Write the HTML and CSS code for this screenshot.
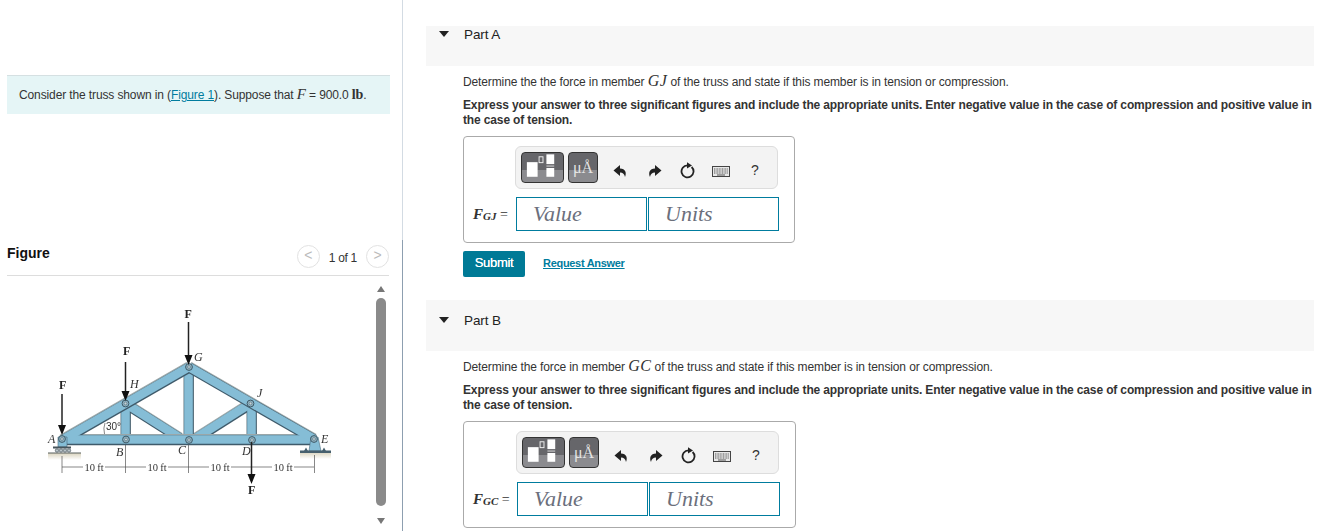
FILE: index.html
```html
<!DOCTYPE html>
<html lang="en">
  <head>
    <meta charset="UTF-8" />
    <title>Truss problem</title>
    <link rel="stylesheet" href="styles.css">
  </head>

  <body>
    <svg class="sprites" width="0" height="0">
      <symbol id="i-undo" viewBox="0 0 14 14">
        <path d="M7 1 L0.5 6.500 L7 12 V8.6 C10 8.6 11.4 10.2 12 13 C13.8 8.8 12.6 4.6 7 4.4 Z" />
      </symbol>
      <symbol id="i-redo" viewBox="0 0 14 14">
        <path d="M7 1 L13.5 6.500 L7 12 V8.6 C4 8.6 2.6 10.2 2 13 C0.2 8.8 1.4 4.6 7 4.4 Z" />
      </symbol>
      <symbol id="i-reset" viewBox="0 0 16 17">
        <path d="M11.6 5 A6 6 0 1 1 7.500 3.400" fill="none" stroke="#222" stroke-width="1.8" />
        <path d="M7 0.2 L12 3.400 L7 6.600 Z" />
      </symbol>
      <symbol id="i-keys" viewBox="0 0 18 11">
        <rect x="0.5" y="0.5" width="17" height="10" fill="#e8e8e8" stroke="#444" />
        <path d="M2 3 H16 M2 5 H16 M2 7 H16" stroke="#555" stroke-width="1" stroke-dasharray="1 .6" />
        <path d="M5 9 H13" stroke="#555" stroke-width="1" />
      </symbol>
      <symbol id="i-tpl" viewBox="0 0 42 30">
        <rect x="5" y="9" width="11" height="15" fill="#fff" />
        <rect x="17.5" y="3.5" width="4" height="6" fill="none" stroke="#eee" />
        <rect x="25" y="1" width="8" height="10" fill="#fff" />
        <rect x="25" y="12.5" width="8" height="1" fill="#ddd" />
        <rect x="25" y="15" width="8" height="9" fill="#fff" />
      </symbol>
    </svg>

    <div class="page">
      <aside class="left">
        <p class="intro">
          Consider the truss shown in (<a href="#">Figure 1</a>). Suppose that <i class="math">F</i> = 900.0 <span class="unit">lb</span>.
        </p>
        <section class="figure">
          <header class="figure-head">
            <h2>Figure</h2>
            <div class="pager">
              <span class="pager-btn">&lt;</span>
              <span class="pager-num">1 of 1</span>
              <span class="pager-btn">&gt;</span>
            </div>
          </header>
          <div class="figure-body">
            <svg class="truss" viewBox="7 276 365 255" width="365" height="255">
              <defs>
                <linearGradient id="shadow" x1="0" y1="0" x2="0" y2="1">
                  <stop offset="0" stop-color="#d9d3bd" />
                  <stop offset="1" stop-color="#ffffff" />
                </linearGradient>
                <g id="pin">
                  <circle r="3.4" fill="#8fb3c2" stroke="#3f5a68" stroke-width="1" />
                  <circle r="1.4" fill="#c9d4d8" stroke="#3f5a68" stroke-width=".5" />
                </g>
                <g id="webs">
                  <line x1="125.500" y1="404" x2="125.500" y2="440" />
                  <line x1="188.500" y1="367" x2="188.500" y2="440" />
                  <line x1="251.500" y1="404" x2="251.500" y2="440" />
                  <line x1="128" y1="405" x2="180" y2="438" />
                  <line x1="196" y1="438" x2="248" y2="405" />
                </g>
                <g id="chords">
                  <line x1="62" y1="439.5" x2="314" y2="439.5" />
                  <line x1="62" y1="440" x2="189" y2="367" />
                  <line x1="189" y1="367" x2="314" y2="439" />
                </g>
              </defs>

              <!-- ground -->
              <rect x="48" y="453" width="33" height="7" fill="url(#shadow)" />
              <rect x="300" y="452" width="31" height="7" fill="url(#shadow)" />

              <!-- web members -->
              <use class="m-top" href="#webs" />
              <use class="m-low" href="#webs" />
              <use class="m-fill" href="#webs" />
              <!-- chords -->
              <use class="m-top" href="#chords" />
              <use class="m-low" href="#chords" />
              <use class="m-fill" href="#chords" />

              <!-- supports -->
              <path d="M58 437 H67 V447 H58 Z" fill="#85bdd6" stroke="#4a6a7a" stroke-width=".6" />
              <rect x="53" y="446.5" width="18" height="2" fill="#47555c" />
              <g fill="#b9c4c8" stroke="#47555c" stroke-width=".7">
                <circle cx="57" cy="450.5" r="1.7" />
                <circle cx="61" cy="450.5" r="1.7" />
                <circle cx="65" cy="450.5" r="1.7" />
                <circle cx="69" cy="450.5" r="1.7" />
              </g>
              <rect x="48" y="452.5" width="33" height="1" fill="#59615f" />
              <path d="M311 437 H318 L321 451 H309 Z" fill="#85bdd6" stroke="#4a6a7a" stroke-width=".6" />
              <path d="M304 451 L306 447.500 L308 451 Z M322 451 L324 447.500 L326 451 Z" fill="#47606e" />
              <rect x="300" y="450.5" width="31" height="2.5" fill="#47606e" />

              <use href="#pin" x="62" y="439" />
              <use href="#pin" x="125.5" y="403.5" />
              <use href="#pin" x="126" y="439.5" />
              <use href="#pin" x="189" y="367" />
              <use href="#pin" x="189" y="440" />
              <use href="#pin" x="250.5" y="403.5" />
              <use href="#pin" x="252" y="440" />
              <use href="#pin" x="314" y="439" />

              <!-- dimensions -->
              <g stroke="#555" stroke-width=".7">
                <line x1="62" y1="467" x2="314" y2="467" />
                <line x1="62" y1="456" x2="62" y2="473" />
                <line x1="125.5" y1="445" x2="125.5" y2="473" />
                <line x1="188.5" y1="445" x2="188.5" y2="473" />
                <line x1="314.5" y1="455" x2="314.5" y2="473" />
              </g>
              <g class="dim">
                <rect x="83" y="461" width="22" height="12" fill="#fff" />
                <rect x="146" y="461" width="22" height="12" fill="#fff" />
                <rect x="209" y="461" width="22" height="12" fill="#fff" />
                <rect x="272" y="461" width="22" height="12" fill="#fff" />
                <text x="94" y="470.5">10 ft</text>
                <text x="157" y="470.5">10 ft</text>
                <text x="220" y="470.5">10 ft</text>
                <text x="283" y="470.5">10 ft</text>
              </g>

              <!-- loads -->
              <g class="arrow">
                <line x1="62" y1="394" x2="62" y2="428" />
                <line x1="125.5" y1="362" x2="125.5" y2="394" />
                <line x1="188.5" y1="322" x2="188.5" y2="358" />
                <line x1="251.5" y1="442" x2="251.5" y2="476" />
              </g>
              <path d="M58 425 H66 L62 435 Z M121.500 391 H129.500 L125.500 401 Z M184.500 355 H192.500 L188.500 365 Z M247.500 474 H255.500 L251.500 484 Z" fill="#111" />

              <g class="load">
                <text x="62.5" y="389">F</text>
                <text x="126.5" y="355">F</text>
                <text x="188" y="318">F</text>
                <text x="251.5" y="494">F</text>
              </g>
              <g class="node">
                <text x="48" y="443">A</text>
                <text x="116" y="456">B</text>
                <text x="178" y="454">C</text>
                <text x="242" y="455">D</text>
                <text x="321" y="443">E</text>
                <text x="194" y="361">G</text>
                <text x="130" y="388">H</text>
                <text x="257" y="397">J</text>
              </g>
              <path d="M105 423 Q103 428 104.500 434" fill="none" stroke="#555" stroke-width=".7" />
              <text class="angle" x="106" y="430">30°</text>
            </svg>
            <div class="vbar">
              <span class="vbar-up"></span>
              <span class="vbar-thumb"></span>
              <span class="vbar-down"></span>
            </div>
          </div>
        </section>
      </aside>

      <main class="right">
        <section class="part">
          <h3 class="part-head part-head--a"><span class="caret"></span>Part A</h3>
          <div class="part-body">
            <p class="prompt">Determine the the force in member <i class="math math--lg">GJ</i> of the truss and state if this member is in tension or compression.</p>
            <p class="hint">Express your answer to three significant figures and include the appropriate units. Enter negative value in the case of compression and positive value in the case of tension.</p>
            <div class="answer">
              <div class="toolbar">
                <span class="tb-btn tb-btn--tpl"><svg width="42" height="30"><use href="#i-tpl" /></svg></span>
                <span class="tb-btn tb-btn--unit">μÅ</span>
                <svg class="tb-ic tb-ic--undo" width="14" height="14"><use href="#i-undo" /></svg>
                <svg class="tb-ic tb-ic--redo" width="14" height="14"><use href="#i-redo" /></svg>
                <svg class="tb-ic tb-ic--reset" width="16" height="17"><use href="#i-reset" /></svg>
                <svg class="tb-ic tb-ic--keys" width="18" height="11"><use href="#i-keys" /></svg>
                <span class="tb-help">?</span>
              </div>
              <div class="fields">
                <label class="field-label field-label--gj"><i>F</i><sub>GJ</sub> =</label>
                <span class="field">Value</span>
                <span class="field">Units</span>
              </div>
            </div>
            <div class="actions">
              <button class="submit">Submit</button>
              <a class="request" href="#">Request Answer</a>
            </div>
          </div>
        </section>

        <section class="part">
          <h3 class="part-head part-head--b"><span class="caret"></span>Part B</h3>
          <div class="part-body">
            <p class="prompt">Determine the force in member <i class="math math--lg">GC</i> of the truss and state if this member is in tension or compression.</p>
            <p class="hint">Express your answer to three significant figures and include the appropriate units. Enter negative value in the case of compression and positive value in the case of tension.</p>
            <div class="answer">
              <div class="toolbar">
                <span class="tb-btn tb-btn--tpl"><svg width="42" height="30"><use href="#i-tpl" /></svg></span>
                <span class="tb-btn tb-btn--unit">μÅ</span>
                <svg class="tb-ic tb-ic--undo" width="14" height="14"><use href="#i-undo" /></svg>
                <svg class="tb-ic tb-ic--redo" width="14" height="14"><use href="#i-redo" /></svg>
                <svg class="tb-ic tb-ic--reset" width="16" height="17"><use href="#i-reset" /></svg>
                <svg class="tb-ic tb-ic--keys" width="18" height="11"><use href="#i-keys" /></svg>
                <span class="tb-help">?</span>
              </div>
              <div class="fields">
                <label class="field-label"><i>F</i><sub>GC</sub> =</label>
                <span class="field">Value</span>
                <span class="field">Units</span>
              </div>
            </div>
          </div>
        </section>
      </main>
    </div>
  </body>
</html>
```

FILE: styles.css
```css
* {
  box-sizing: border-box;
}
html,
body {
  margin: 0;
  height: 531px;
  overflow: hidden;
  background: #fff;
}
body {
  font-family: "Liberation Sans", Arial, sans-serif;
  font-size: 12px;
  letter-spacing: -0.12px;
  color: #333;
}
.sprites {
  position: absolute;
}
.page {
  display: flex;
  height: 531px;
}

/* left column */
.left {
  width: 403px;
  flex: none;
  padding-top: 75px;
  border-right: 1px solid #d3dbe3;
}
.intro {
  margin: 0 12px 0 7px;
  height: 39px;
  padding: 11px 12px 0;
  line-height: 16px;
  background: #e5f5f6;
  border-top: 1px solid #d5e0e2;
}
.intro a {
  color: #007c9e;
}
.math {
  font-family: "Liberation Serif", serif;
  font-size: 15px;
  line-height: 1;
}
.math--lg {
  font-size: 16px;
  letter-spacing: 0.5px;
}
.unit {
  font-family: "Liberation Serif", serif;
  font-size: 14px;
  font-weight: bold;
  line-height: 1;
}
.figure {
  margin-top: 126px;
  margin-right: -1px;
  height: 291px;
  border-right: 1px solid #8d9fb0;
}
.figure-head {
  display: flex;
  justify-content: space-between;
  align-items: center;
  margin: 0 13px 0 7px;
  height: 36px;
  border-bottom: 1px solid #ddd;
  padding-bottom: 8px;
}
.figure-head h2 {
  margin: 0 0 2px;
  font-size: 14px;
  font-weight: bold;
  letter-spacing: 0;
  color: #111;
}
.pager {
  display: flex;
  align-items: center;
  gap: 9px;
  margin-top: 5px;
}
.pager-btn {
  width: 23px;
  height: 23px;
  border: 1px solid #e2e2e2;
  border-radius: 50%;
  text-align: center;
  line-height: 19px;
  font-size: 14px;
  color: #bbb;
}
.pager-num {
  padding-top: 3px;
  letter-spacing: -0.3px;
  color: #333;
}
.figure-body {
  display: flex;
  height: 255px;
  padding-left: 7px;
}
.truss {
  display: block;
  flex: none;
  filter: blur(0.3px);
}
.m-top {
  stroke: #9aa6a8;
  stroke-width: 10;
  transform: translate(0, -0.6px);
}
.m-low {
  stroke: #3f5a6a;
  stroke-width: 10;
  transform: translate(0.3px, 0.7px);
}
.m-fill {
  stroke: #85bdd6;
  stroke-width: 8.6;
}
.arrow line {
  stroke: #222;
  stroke-width: 1.5;
}
.load text {
  font: bold 12px "Liberation Serif", serif;
  fill: #222;
  text-anchor: middle;
}
.node text {
  font: italic 12px "Liberation Serif", serif;
  fill: #333;
}
.dim text {
  font: 10.5px "Liberation Serif", serif;
  fill: #333;
  text-anchor: middle;
}
.angle {
  font: 10px "Liberation Sans", sans-serif;
  fill: #333;
}
.vbar {
  width: 10px;
  margin-left: 4px;
  display: flex;
  flex-direction: column;
  align-items: center;
}
.vbar-up,
.vbar-down {
  width: 0;
  height: 0;
  border-left: 4.5px solid transparent;
  border-right: 4.5px solid transparent;
}
.vbar-up {
  margin-top: 10px;
  border-bottom: 6px solid #777;
}
.vbar-thumb {
  width: 10px;
  height: 208px;
  margin: 6px 0 12px;
  background: #8a8a8a;
  border-radius: 5px;
}
.vbar-down {
  border-top: 6px solid #777;
}

/* right column */
.right {
  width: 888px;
  margin-left: 23px;
  padding-top: 26px;
  flex: none;
}
.part-head {
  margin: 0;
  background: #f7f7f7;
  padding-left: 38px;
  font-size: 13.5px;
  font-weight: normal;
  letter-spacing: -0.1px;
  line-height: 16px;
  color: #222;
}
.part-head--a {
  height: 40px;
  padding-top: 1px;
}
.part-head--b {
  height: 51px;
  padding-top: 13px;
  margin-top: 23px;
}
.caret {
  display: inline-block;
  width: 0;
  height: 0;
  margin: 0 15px 2px -25px;
  border-left: 5px solid transparent;
  border-right: 5px solid transparent;
  border-top: 6px solid #222;
  vertical-align: middle;
}
.part-body {
  padding-left: 37px;
}
.prompt {
  margin: 7px 0 0;
  line-height: 15px;
  height: 15px;
}
.hint {
  margin: 10px 0 0;
  font-weight: bold;
  letter-spacing: -0.14px;
  line-height: 14.5px;
}
.answer {
  display: inline-flex;
  flex-direction: column;
  align-items: flex-end;
  margin-top: 9px;
  padding: 9px 15px 11px 9px;
  border: 1px solid #aaa;
  border-radius: 4px;
  height: 107px;
}
.toolbar {
  display: flex;
  align-items: center;
  width: 263px;
  height: 43px;
  margin-right: 1px;
  padding-left: 5px;
  background: #f3f3f3;
  border: 1px solid #ddd;
  border-radius: 6px;
}
.tb-btn {
  height: 31px;
  border: 1px solid #333;
  border-radius: 4px;
  background: linear-gradient(#66666a 58%, #8b8b8f 58%);
  display: flex;
  align-items: center;
  justify-content: center;
}
.tb-btn--tpl {
  width: 43px;
}
.tb-btn--unit {
  width: 30px;
  margin-left: 4px;
  font-family: "Liberation Serif", serif;
  font-size: 16px;
  color: #e4e4e4;
}
.tb-ic {
  fill: #222;
  flex: none;
  margin-top: 6px;
}
.tb-ic--undo {
  margin-left: 15px;
}
.tb-ic--redo {
  margin-left: 21px;
}
.tb-ic--reset {
  margin-left: 18px;
}
.tb-ic--keys {
  margin-left: 16px;
  margin-top: 7px;
}
.tb-help {
  margin-left: 21px;
  margin-top: 4px;
  font-size: 14px;
  color: #333;
}
.fields {
  display: flex;
  align-items: center;
  margin-top: 8px;
}
.field-label {
  width: 44px;
  font-family: "Liberation Serif", serif;
  font-size: 14px;
  letter-spacing: 0;
  white-space: nowrap;
}
.field-label--gj {
  width: 43px;
}
.field-label i {
  font-size: 15px;
  font-weight: bold;
}
.field-label sub {
  font-size: 11px;
  font-style: italic;
  font-weight: bold;
  vertical-align: -1px;
}
.field {
  width: 131px;
  height: 34px;
  margin-right: 1px;
  padding-left: 16px;
  border: 1px solid #007c9e;
  font-family: "Liberation Serif", serif;
  font-style: italic;
  font-size: 22px;
  letter-spacing: 0;
  line-height: 31px;
  color: #6b6f7c;
}
.field:last-child {
  margin-right: 0;
}
.actions {
  display: flex;
  align-items: center;
  margin-top: 8px;
}
.submit {
  width: 62px;
  height: 26px;
  padding: 0 0 4px;
  border: 0;
  border-radius: 2px;
  background: #007a96;
  color: #fff;
  font-family: inherit;
  font-size: 13px;
  font-weight: normal;
  letter-spacing: -0.3px;
  text-shadow: 0 0 0.6px #fff;
}
.request {
  margin-left: 18px;
  margin-bottom: 2px;
  color: #007c9e;
  font-size: 11px;
  font-weight: bold;
  letter-spacing: -0.3px;
}
```
